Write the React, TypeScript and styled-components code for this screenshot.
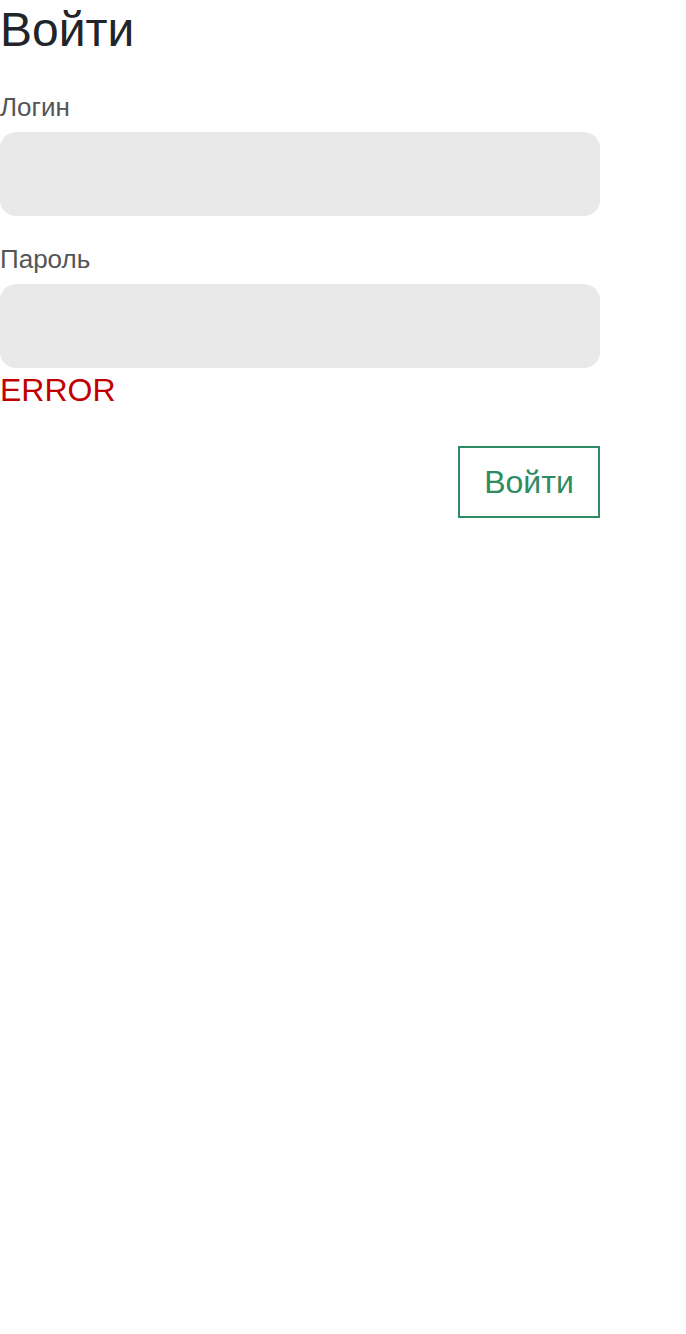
import React from "react";
import styled, { createGlobalStyle } from "styled-components";

const Global = createGlobalStyle`
  html, body { margin: 0; padding: 0; background: #fff; }
  body { font-family: "Liberation Sans", Arial, sans-serif; }
`;

const Form = styled.form`
  width: 600px;
  display: flex;
  flex-direction: column;
`;

const Title = styled.h1`
  margin: 2px 0 0;
  font-size: 48px;
  font-weight: 400;
  line-height: 56px;
  color: #212529;
`;

const Field = styled.div<{ $top: number }>`
  display: flex;
  flex-direction: column;
  margin-top: ${(p) => p.$top}px;
`;

const Label = styled.label`
  font-size: 26px;
  line-height: 30px;
  color: #555;
  margin-bottom: 10px;
`;

const Input = styled.input`
  box-sizing: border-box;
  height: 84px;
  border: none;
  border-radius: 16px;
  background: #e9e9e9;
  outline: none;
  padding: 0 20px;
  font: inherit;
  font-size: 24px;
`;

const Error = styled.div`
  margin-top: 4px;
  font-size: 32px;
  line-height: 36px;
  color: #c00000;
`;

const Actions = styled.div`
  display: flex;
  justify-content: flex-end;
  margin-top: 38px;
`;

const Button = styled.button`
  box-sizing: border-box;
  width: 142px;
  height: 72px;
  background: #fff;
  border: 2px solid #2e8b62;
  color: #2e8b62;
  font-family: "Liberation Sans", Arial, sans-serif;
  font-size: 32px;
  padding: 0;
  cursor: pointer;
`;

export default function App() {
  return (
    <>
      <Global />
      <Form onSubmit={(e) => e.preventDefault()}>
        <Title>Войти</Title>
        <Field $top={34}>
          <Label>Логин</Label>
          <Input type="text" />
        </Field>
        <Field $top={28}>
          <Label>Пароль</Label>
          <Input type="password" />
        </Field>
        <Error>ERROR</Error>
        <Actions>
          <Button type="submit">Войти</Button>
        </Actions>
      </Form>
    </>
  );
}
